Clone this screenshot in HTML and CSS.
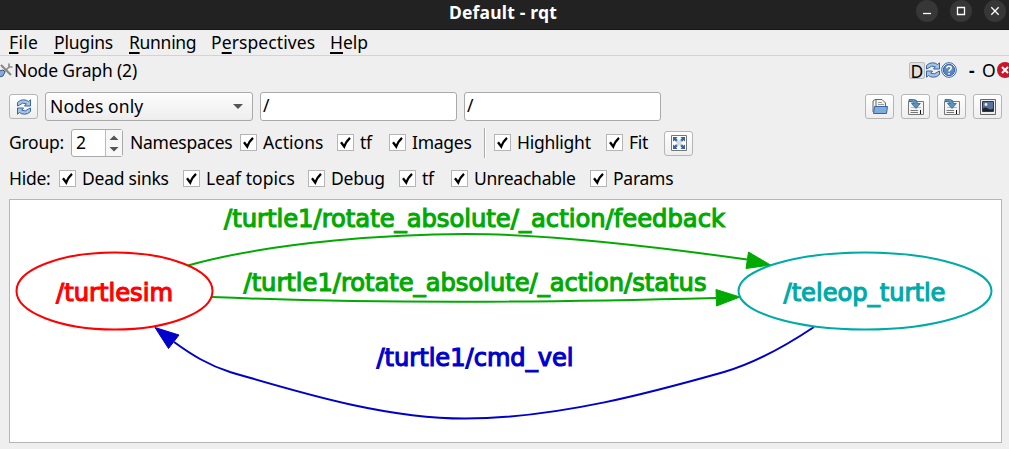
FILE: index.html
```html
<!DOCTYPE html>
<html lang="en">
<head>
<meta charset="utf-8">
<title>Default - rqt</title>
<link rel="stylesheet" href="styles.css">
</head>
<body>
<svg class="defs" width="0" height="0">
  <symbol id="refresh" viewBox="0 0 16 16">
    <path d="M1.500 7V3.500Q4 .8 7.500 .8Q10.500 .8 12.500 2.500L14.500 .8V7H8.500L10.300 4.800Q6.500 2.800 3.500 6Z" fill="#a9c3e3" stroke="#3465a4"/>
    <path d="M14.500 9V12.500Q12 15.200 8.500 15.200Q5.500 15.200 3.500 13.500L1.500 15.200V9H7.500L5.700 11.200Q9.500 13.200 12.500 10Z" fill="#a9c3e3" stroke="#3465a4"/>
  </symbol>
  <symbol id="save" viewBox="0 0 16 16">
    <path d="M.5 2.500H15.500V15.500H.5Z" fill="#f5f5f3" stroke="#777"/>
    <path d="M3 8.500H13" stroke="#bbb" fill="none"/>
    <path d="M2.500 11.500H10M2.500 13.500H10" stroke="#777"/><path d="M12.500 11V15" stroke="#111"/>
    <path d="M1 .5H5.500Q9.500 .5 9.500 4.500H12.300L8 9.500L3.500 4.500H6.300Q6 2.500 1 2.500Z" fill="#5d92bd" stroke="#2d6389" stroke-width=".8"/>
  </symbol>
</svg>
<div class="window">
  <header class="titlebar">
    <span class="side"></span>
    <span class="title">Default - rqt</span>
    <span class="side controls">
      <i class="ctl"><svg width="22" height="22"><path d="M7 13.500H15" /></svg></i>
      <i class="ctl"><svg width="22" height="22"><path d="M7.500 7.500H14.500V14.500H7.500Z"/></svg></i>
      <i class="ctl"><svg width="22" height="22"><path d="M7.300 7.300L14.700 14.700M14.700 7.300L7.300 14.700"/></svg></i>
    </span>
  </header>
  <nav class="menubar">
    <span class="m1"><u>F</u>ile</span><span class="m2"><u>P</u>lugins</span><span class="m3"><u>R</u>unning</span><span class="m4">P<u>e</u>rspectives</span><span class="m5"><u>H</u>elp</span>
  </nav>
  <div class="dock">
    <svg class="tools" width="13" height="16" viewBox="0 0 13 16"><path d="M1 3L11 13" stroke="#888" stroke-width="2.200"/><path d="M2 12L9.500 4.500M9 1.500V5H12.500" fill="none" stroke="#888" stroke-width="1.600"/><path d="M-1 9L3 8L5 10L3 14L-1 15Z" fill="#8da9cd" stroke="#30598f"/></svg>
    <span class="dock-title">Node Graph (2)</span>
    <span class="dbtn">D</span>
    <svg width="16" height="16"><use href="#refresh"/></svg>
    <svg width="16" height="16" viewBox="0 0 16 16"><circle cx="8" cy="8" r="7.300" fill="#fff" stroke="#3465a4"/><circle cx="8" cy="8" r="5.700" fill="#5d87bd" stroke="#3465a4"/><path d="M5.800 6.300Q5.700 4.200 8 4.200Q10.300 4.200 10.200 6Q10.200 7.200 8.800 8Q8 8.500 8 9.500M8 11V12.500" fill="none" stroke="#fff" stroke-width="1.500"/></svg>
    <b class="dash">-</b><span class="float">O</span>
    <svg class="close" width="12" height="16" viewBox="0 0 12 16"><circle cx="8" cy="8" r="8" fill="#c9162b"/><path d="M5 5L11 11M11 5L5 11" stroke="#fff" stroke-width="2"/></svg>
  </div>
  <div class="row row1">
    <button class="tb"><svg width="16" height="16"><use href="#refresh"/></svg></button>
    <div class="combo"><span>Nodes only</span><svg width="10" height="5"><path d="M0 0H10L5 5Z" fill="#555"/></svg></div>
    <div class="field">/</div>
    <div class="field f2">/</div>
    <div class="actions">
      <button class="tb"><svg width="18" height="17" viewBox="0 0 18 17"><path d="M2 14V3L4 1.500H8M5 14V1.500H11L14.500 5V12" fill="#f4f4f2" stroke="#666"/><path d="M7 4.500H11M7 6.500H13" stroke="#999"/><path d="M3.500 8.500H16.500L15.500 15.500H2.500Z" fill="#7facd9" stroke="#3465a4"/></svg></button>
      <button class="tb"><svg width="16" height="16"><use href="#save"/></svg></button>
      <button class="tb"><svg width="16" height="16"><use href="#save"/></svg></button>
      <button class="tb"><svg width="16" height="16" viewBox="0 0 16 16"><path d="M.5 .5H15.500V15.500H.5Z" fill="#eee" stroke="#666"/><path d="M2.500 2.500H13.500V12.500H2.500Z" fill="#5873a0" stroke="#27375b"/><path d="M3 9.500Q5 7.500 8 9.500T13 9.500V12H3Z" fill="#20232c"/><circle cx="6" cy="5.500" r="1.400" fill="#fff4b0"/></svg></button>
    </div>
  </div>
  <div class="row row2">
    <span class="lb group">Group:</span>
    <div class="spin"><span>2</span><div class="arrows"><svg width="16" height="26"><path d="M3.500 10H12.500L8 5.500ZM3.500 17H12.500L8 21.500Z" fill="#555"/></svg></div></div>
    <span class="lb namespaces">Namespaces</span>
    <span class="check"></span><span class="lb actions-l">Actions</span>
    <span class="check"></span><span class="lb tf">tf</span>
    <span class="check"></span><span class="lb images">Images</span>
    <span class="divider"></span>
    <span class="check"></span><span class="lb highlight">Highlight</span>
    <span class="check"></span><span class="lb fit">Fit</span>
    <button class="tb"><svg width="16" height="16" viewBox="0 0 16 16"><path d="M.5 .5H15.500V15.500H.5Z" fill="#fff" stroke="#777"/><path d="M2 2H6.500L5.200 3.500L7 5.300L5.300 7L3.500 5.200L2 6.500ZM14 2H9.500L10.800 3.500L9 5.300L10.700 7L12.500 5.200L14 6.500ZM2 14H6.500L5.200 12.500L7 10.700L5.300 9L3.500 10.800L2 9.500ZM14 14H9.500L10.800 12.500L9 10.700L10.700 9L12.500 10.800L14 9.500Z" fill="#3465a4"/><path d="M5.500 5.500H10.500V10.500H5.500Z" fill="#d3dceb"/></svg></button>
  </div>
  <div class="row row3">
    <span class="lb hide">Hide:</span>
    <span class="check"></span><span class="lb dead">Dead sinks</span>
    <span class="check"></span><span class="lb leaf">Leaf topics</span>
    <span class="check"></span><span class="lb debug">Debug</span>
    <span class="check"></span><span class="lb tf3">tf</span>
    <span class="check"></span><span class="lb unreach">Unreachable</span>
    <span class="check"></span><span class="lb params">Params</span>
  </div>
  <main class="graph">
    <svg width="991" height="242" viewBox="10 200 991 242">
      <g class="edge green">
        <path d="M188 265.500C275 241 400 234 465 234C550 234 665 248 747 259.500"/>
        <path class="fill" d="M748.500 252L770.500 265L746 268.500Z"/>
        <path d="M212 297C380 304 540 302.500 716 298"/>
        <path class="fill" d="M716 289.500L740 297L716.500 306Z"/>
      </g>
      <g class="edge blue">
        <path d="M814 327C790 343 755 363 724 372C660 390 560 418.500 465 418.500C380 418.500 290 389 230 372C208 365 192 355 174 342"/>
        <path class="fill" d="M155 327.500L179 335L168.500 348.500Z"/>
      </g>
      <ellipse class="node red" cx="114.500" cy="291" rx="98" ry="38.500"/>
      <ellipse class="node teal" cx="865" cy="291" rx="126.500" ry="38.500"/>
      <text class="red" x="56" y="300.500" textLength="117" lengthAdjust="spacingAndGlyphs">/turtlesim</text>
      <text class="teal" x="783.500" y="300.500" textLength="162" lengthAdjust="spacingAndGlyphs">/teleop_turtle</text>
      <text class="green" x="224" y="226.500" textLength="501" lengthAdjust="spacingAndGlyphs">/turtle1/rotate_absolute/_action/feedback</text>
      <text class="green" x="243.500" y="290.500" textLength="463" lengthAdjust="spacingAndGlyphs">/turtle1/rotate_absolute/_action/status</text>
      <text class="blue" x="376.500" y="365.500" textLength="197" lengthAdjust="spacingAndGlyphs">/turtle1/cmd_vel</text>
    </svg>
  </main>
</div>
<script src="checks.js"></script>
</body>
</html>
```
FILE: checks.js
```javascript
// Draws the tick inside each check box.
document.querySelectorAll('.check').forEach(function (box) {
  box.innerHTML = '<svg width="15" height="15" viewBox="0 0 15 15"><path d="M3 7.2L6.200 11.500Q8 6.500 12 2.800" fill="none" stroke="#000" stroke-width="2.300"/></svg>';
});
```
FILE: styles.css
```css
* { box-sizing: border-box; }
body { margin: 0; background: #efefef; color: #000; font: 17.500px/24px "Noto Sans", "Open Sans", sans-serif; overflow: hidden; }
svg { display: block; flex: none; }
.defs { display: none; }
.window { width: 1009px; height: 449px; display: flex; flex-direction: column; }
.titlebar { height: 30px; flex: none; background: #222; border-bottom: 1px solid #151515; display: flex; color: #fff; }
.side { flex: 1; }
.title { font-weight: 700; font-size: 17.500px; line-height: 24px; letter-spacing: .2px; }
.controls { display: flex; justify-content: flex-end; gap: 12px; padding-right: 3px; }
.ctl { width: 22px; height: 22px; border-radius: 50%; background: #373737; }
.ctl path { fill: none; stroke: #fff; stroke-width: 1.300; }
.menubar { height: 26px; flex: none; border-bottom: 1px solid #d3d3d3; padding-left: 9px; display: flex; white-space: nowrap; }
.menubar u { text-decoration-thickness: 2px; text-underline-offset: 3px; text-decoration-skip-ink: none; }
.m1 { width: 45px; letter-spacing: .3px; } .m2 { width: 75px; letter-spacing: -.2px; } .m3 { width: 82px; letter-spacing: -.3px; } .m4 { width: 119px; letter-spacing: .1px; }
.m5 { letter-spacing: 0; }
.dock { height: 31px; flex: none; display: flex; align-items: center; padding-bottom: 3px; }
.tools { margin-right: 1px; }
.dock-title { flex: 1; letter-spacing: -.15px; }
.dbtn { width: 16px; height: 17px; line-height: 16px; border: 1px solid #bbb; border-radius: 2px; background: #e0e0e0; display: flex; justify-content: center; }
.dash { margin-left: 12px; width: 13px; } .float { width: 15px; }
.row { flex: none; display: flex; align-items: center; padding-left: 9px; white-space: nowrap; }
.row1 { height: 38px; padding-top: 1px; }
.tb { width: 29px; height: 25px; padding: 0; border: 1px solid #b5b5b5; border-radius: 3px; background: linear-gradient(#fff, #eee); display: flex; align-items: center; justify-content: center; flex: none; }
.combo { margin-left: 7px; width: 208px; height: 29px; border: 1px solid #aaa; border-radius: 3px; background: linear-gradient(#fdfdfd, #ededed); display: flex; align-items: center; justify-content: space-between; padding: 0 9px 0 4px; }
.combo span { padding-bottom: 2px; letter-spacing: .1px; }
.field { margin-left: 7px; width: 197px; height: 29px; border: 1px solid #aaa; border-radius: 3px; background: #fff; padding-left: 2px; line-height: 25px; }
.f2 { margin-left: 7px; }
.actions { display: flex; gap: 7px; margin-left: auto; padding-right: 7px; }
.row2 { height: 36px; }
.row2 .lb { padding-bottom: 2px; }
.group { width: 62px; }
.spin { width: 52px; height: 28px; border: 1px solid #aaa; border-radius: 3px; background: #fff; display: flex; padding-left: 4px; }
.arrows { margin-left: auto; border-left: 1px solid #bbb; background: #f7f7f7; }
.namespaces { margin-left: 7px; width: 110px; }
.check { flex: none; width: 17px; height: 17px; border: 1px solid #b5b5b5; background: #fff; }
.row2 .check { margin-bottom: 1px; }
.lb { flex: none; letter-spacing: -.25px; }
.check + .lb { padding-left: 6px; }
.actions-l { width: 80px; } .actions-l.lb { letter-spacing: .05px; } .tf { width: 35px; } .images { width: 78px; }
.divider { width: 2px; height: 30px; border-left: 1px solid #aaa; border-right: 1px solid #fff; margin-right: 8px; }
.highlight { width: 95px; } .fit { width: 41px; }
.row3 { height: 34px; }
.hide { width: 50px; } .dead { width: 107px; } .leaf { width: 108px; } .leaf.lb { letter-spacing: .05px; } .debug { width: 74px; } .tf3 { width: 35px; } .unreach { width: 122px; }
.graph { margin: 4px 7px 0 9px; height: 244px; flex: none; border: 1px solid #b5b5b5; background: #fff; }
.graph text { font: 25.500px "DejaVu Sans Condensed", "DejaVu Sans", sans-serif; font-stretch: condensed; stroke-width: 1.100; }
.edge path { fill: none; stroke-width: 2; }
.node { stroke-width: 2; }
.red { stroke: #f00; fill: #f00; }
.teal { stroke: #0aa; fill: #0aa; }
.green { stroke: #0a0; fill: #0a0; }
.blue { stroke: #00c; fill: #00c; }
.edge .fill { fill: inherit; stroke-width: 1; }
ellipse.node { fill: none; }
```
